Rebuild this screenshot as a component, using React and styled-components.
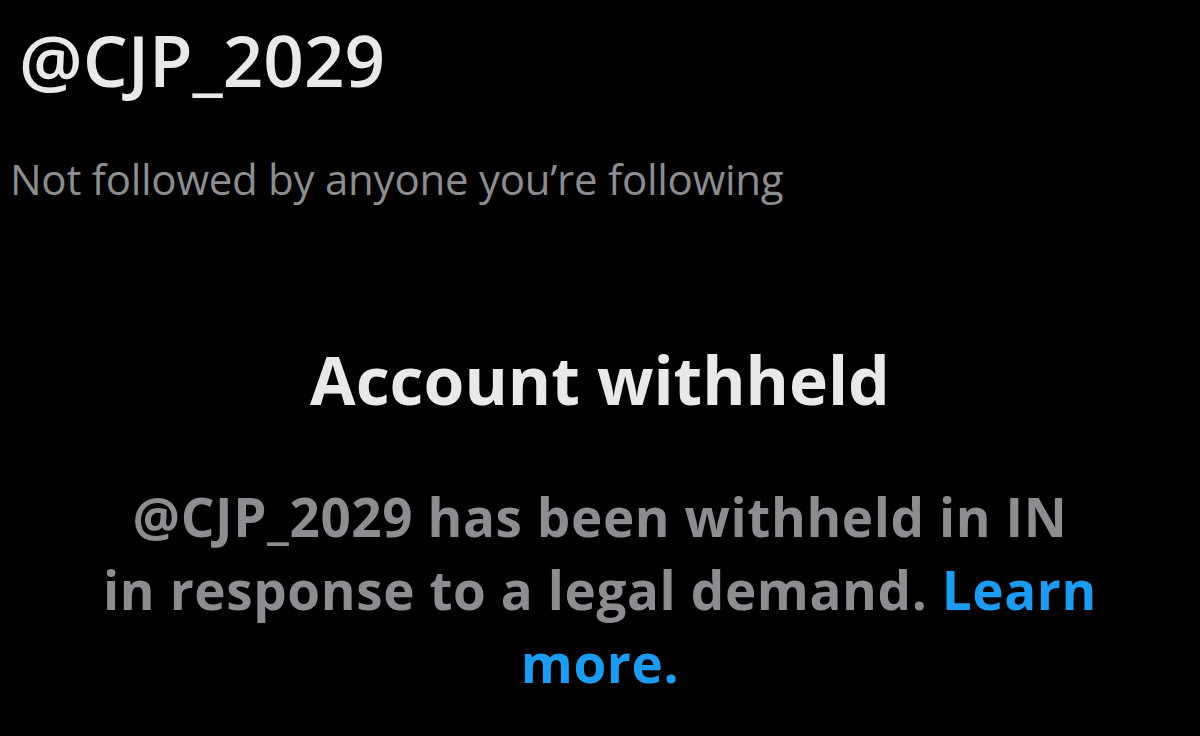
import React from "react";
import styled, { createGlobalStyle } from "styled-components";

const GlobalStyle = createGlobalStyle`
  html, body {
    margin: 0;
    padding: 0;
    background: #000;
  }
  body {
    font-family: "Open Sans", "Noto Sans", "Liberation Sans", sans-serif;
    -webkit-font-smoothing: antialiased;
  }
`;

const Page = styled.div`
  width: 1200px;
  height: 736px;
  background: #000;
  overflow: hidden;
  display: flex;
  flex-direction: column;
`;

const ProfileHeader = styled.header`
  padding: 20px 0 0 10px;
  display: flex;
  flex-direction: column;
`;

const Handle = styled.h1`
  margin: 0 0 0 9px;
  font-size: 71px;
  line-height: 80px;
  font-weight: 600;
  color: #e7e9ea;
`;

const FollowInfo = styled.p`
  margin: 55px 0 0;
  font-size: 42px;
  line-height: 48px;
  font-weight: 400;
  color: #8b8d90;
  letter-spacing: -0.25px;
`;

const Notice = styled.section`
  margin: 138px auto 0;
  width: 1010px;
  display: flex;
  flex-direction: column;
  align-items: center;
  text-align: center;
`;

const NoticeTitle = styled.h2`
  margin: 0;
  font-size: 66px;
  line-height: 76px;
  font-weight: 700;
  color: #e7e9ea;
`;

const NoticeBody = styled.p`
  margin: 63px 0 0;
  font-size: 53px;
  line-height: 73px;
  font-weight: 700;
  color: #8b8d90;
  letter-spacing: 0.6px;
`;

const LearnMore = styled.a`
  color: #1d9bf0;
  text-decoration: none;
`;

export default function App() {
  return (
    <>
      <GlobalStyle />
      <Page>
        <ProfileHeader>
          <Handle>@CJP_2029</Handle>
          <FollowInfo>Not followed by anyone you’re following</FollowInfo>
        </ProfileHeader>
        <Notice>
          <NoticeTitle>Account withheld</NoticeTitle>
          <NoticeBody>
            @CJP_2029 has been withheld in IN
            <br />
            in response to a legal demand.{" "}
            <LearnMore href="#">Learn more.</LearnMore>
          </NoticeBody>
        </Notice>
      </Page>
    </>
  );
}
